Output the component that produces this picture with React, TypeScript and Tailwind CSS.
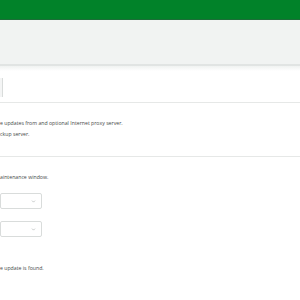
import { ChevronDown } from "lucide-react";

function SelectStub() {
  return (
    <div className="h-[16px] w-[42px] rounded-[2px] border border-[#d9dcdb] bg-white flex items-center justify-end pr-[5px]">
      <ChevronDown className="w-[5px] h-[5px] text-[#7d8280]" strokeWidth={2} />
    </div>
  );
}

export default function App() {
  return (
    <div className="w-[300px] h-[300px] overflow-hidden bg-white font-['Open_Sans',sans-serif] text-[#454947]">
      <header className="h-[20px] bg-[#018229] border-b border-[#1b6e37]" />
      <section className="h-[46px] bg-[#f1f3f2] border-b-2 border-[#e1e4e3]" />
      <div className="h-[5px] bg-gradient-to-b from-[#f0f2f1] to-white" />

      <div className="pt-[7px] pb-[5px] border-b border-[#e6e8e7]">
        <div className="h-[19px] w-[3px] border-r border-[#d9dcdb] bg-[#f4f5f5]" />
      </div>

      <div className="pt-[17px] pb-[19px] border-b border-[#e6e8e7] flex flex-col gap-[5px] text-[5.2px] leading-[6px]">
        <p>e updates from and optional Internet proxy server.</p>
        <p>ckup server.</p>
      </div>

      <div className="pt-[17px] flex flex-col text-[5.2px] leading-[6px]">
        <p>aintenance window.</p>
        <div className="mt-[13px] flex flex-col gap-[12px]">
          <SelectStub />
          <SelectStub />
        </div>
        <p className="mt-[28px]">e update is found.</p>
      </div>
    </div>
  );
}
